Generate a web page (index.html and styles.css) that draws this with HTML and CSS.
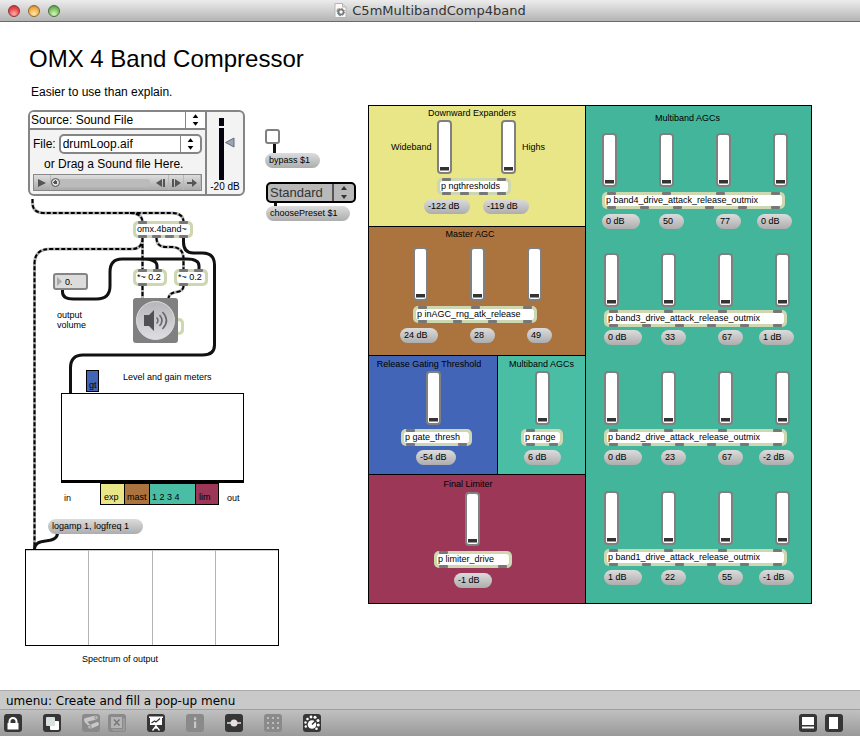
FILE: index.html
```html
<!DOCTYPE html>
<html lang="en">
<head>
<meta charset="utf-8">
<title>C5mMultibandComp4band</title>
<link rel="stylesheet" href="styles.css">
</head>
<body>
<header class="titlebar">
  <div class="lights">
    <button class="light red" aria-label="Close"></button>
    <button class="light amber" aria-label="Minimize"></button>
    <button class="light green" aria-label="Zoom"></button>
  </div>
  <div class="doc">
    <svg width="13" height="15" viewBox="0 0 13 15" aria-hidden="true"><path d="M1 .5h7.500l3.500 3.500v10.500h-11z" fill="#fafafa" stroke="#b5b5b5"/><path d="M8.500.5v3.500h3.500" fill="#ddd" stroke="#b5b5b5"/><path d="M3 7l3 6" stroke="#7cc8e8" stroke-width="2"/><path d="M3 7l2-1" stroke="#f0a060" stroke-width="2"/><circle cx="7" cy="9" r="2.500" fill="none" stroke="#777" stroke-width="1.500"/><circle cx="7" cy="9" r="3.600" fill="none" stroke="#777" stroke-dasharray="1.400 1.430"/></svg>
    <span>C5mMultibandComp4band</span>
  </div>
</header>

<main class="canvas">
  <h1 class="node title">OMX 4 Band Compressor</h1>
  <p class="node subtitle">Easier to use than explain.</p>

  <svg class="node wires" width="360" height="640" viewBox="0 22 360 640" aria-hidden="true">
    <g class="audio">
      <path d="M32.500 199v4q0 10 12 10h127q12 0 12 9M130 213q12 0 12.500 9"/>
      <path d="M142.500 238v32M142.500 238q0 11-11 11H50q-15.500 0-15.500 15v285"/>
      <path d="M156.500 238q0 9 10 9h5q12 0 12 12v11M142.500 286v13M183.500 286q0 5-7 6q-8 1-8 7"/>
    </g>
    <g class="dash">
      <path d="M32.500 199v4q0 10 12 10h127q12 0 12 9M130 213q12 0 12.500 9"/>
      <path d="M142.500 238v32M142.500 238q0 11-11 11H50q-15.500 0-15.500 15v285"/>
      <path d="M156.500 238q0 9 10 9h5q12 0 12 12v11M142.500 286v13M183.500 286q0 5-7 6q-8 1-8 7"/>
    </g>
    <g class="control">
      <path d="M183.500 238v4q0 11 10 11h9q12 0 12 12v80q0 10-12 10H83q-12.500 0-12.500 13v26"/>
      <path d="M62.500 290v2q0 7 11 7h23q13.500 0 13.500-13v-14q0-13 12-13h65q12 0 12 7v4M142 259q15 0 15 7v4"/>
      <path d="M57.500 533q0 7-12 8q-11 1-11 8"/>
      <path d="M274.500 143v10M275.500 202v5"/>
    </g>
  </svg>

  <section class="node source" aria-label="Audio source">
    <div class="source-main">
      <label class="pick source-pick"><select aria-label="Source"><option>Source: Sound File</option></select><svg width="20" height="16" viewBox="0 0 20 16"><path d="M10 2l3 4H7zM10 14l3-4H7z"/></svg></label>
      <div class="source-file">
        <div class="file-row"><label for="file">File:</label>
          <span class="pick file-pick"><select id="file"><option>drumLoop.aif</option></select><svg width="20" height="16" viewBox="0 0 20 16"><path d="M10 2l3 4H7zM10 14l3-4H7z"/></svg></span>
        </div>
        <div class="drop">or Drag a Sound file Here.</div>
        <div class="player">
          <button aria-label="Play"><svg width="16" height="15" viewBox="0 0 16 15"><path d="M4 4l8 4-8 4z"/></svg></button>
          <input type="range" value="0" aria-label="Position">
          <button aria-label="Back"><svg width="14" height="15" viewBox="0 0 14 15"><path d="M8 4v8L2 8zM9 4h2v8H9z"/></svg></button>
          <button aria-label="Forward"><svg width="14" height="15" viewBox="0 0 14 15"><path d="M3 4h2v8H3zM6 4l6 4-6 4z"/></svg></button>
          <button aria-label="Loop"><svg width="16" height="15" viewBox="0 0 16 15"><path d="M3 7h5V4l5 4-5 4V9H3z"/></svg></button>
        </div>
      </div>
    </div>
    <div class="gain">
      <svg width="34" height="64" viewBox="0 0 34 64" aria-hidden="true"><path d="M12 1h5v8h-5zM12 11h5v52h-5z" fill="#03030f"/><path d="M18.500 25.500l8.500-4.500v9z" fill="#9aa5b8" stroke="#666d7c"/></svg>
      <span>-20 dB</span>
    </div>
  </section>

  <input class="node toggle" type="checkbox" aria-label="Bypass">
  <button class="node msg bypass">bypass $1</button>
  <label class="node preset"><select aria-label="Preset"><option>Standard</option></select><svg width="18" height="17" viewBox="0 0 18 17"><path d="M9 2l3 4H6zM9 15l3-4H6z"/></svg></label>
  <button class="node msg choose">choosePreset $1</button>

  <div class="node obj omx"><div class="ports"><i></i><i></i></div><span>omx.4band~</span><div class="ports"><i></i><i></i><i></i><i></i></div></div>
  <div class="node obj mul-left"><div class="ports few"><i></i><i></i></div><span>*~ 0.2</span><div class="ports"><i></i></div></div>
  <div class="node obj mul-right"><div class="ports few"><i></i><i></i></div><span>*~ 0.2</span><div class="ports"><i></i></div></div>
  <div class="node number"><svg width="6" height="11" viewBox="0 0 6 11" aria-hidden="true"><path d="M0 1l5 4.500L0 10z" fill="#aaa"/></svg><input type="text" value="0." aria-label="Output volume"></div>
  <p class="node note volume-note">output<br>volume</p>
  <div class="node obj hidden-obj"><span></span></div>
  <button class="node dac" aria-label="Audio on or off"><svg width="45" height="45" viewBox="0 0 45 45"><defs><linearGradient id="disc" x2="0" y2="1"><stop stop-color="#b5b5ba"/><stop offset="1" stop-color="#dedee2"/></linearGradient></defs><circle cx="22.500" cy="22.500" r="19" fill="url(#disc)" stroke="#dcdce0"/><path d="M11 17h5l5-5v21l-5-5h-5z" fill="#505055"/><path d="M23.500 19.500q3 3 0 6M26.500 17q5 5.500 0 11M29.500 14q8 8.500 0 17" fill="none" stroke="#68686c" stroke-width="1.500"/></svg></button>

  <div class="node tag gt">gt</div>
  <p class="node note level-note">Level and gain meters</p>
  <div class="node meter"></div>
  <p class="node note in-note">in</p>
  <div class="node legend"><span class="exp">exp</span><span class="mast">mast</span><span class="bands">1 2 3 4</span><span class="lim">lim</span></div>
  <p class="node note out-note">out</p>
  <button class="node msg log">logamp 1, logfreq 1</button>
  <div class="node spectrum"><i></i><i></i><i></i><i></i></div>
  <p class="node note spectrum-note">Spectrum of output</p>

  <div class="node board">
    <section class="panel expanders">
      <h2>Downward Expanders</h2>
      <div class="strip">
        <div class="faders"><label for="wide">Wideband</label><input id="wide" type="range" value="0"><input id="highs" type="range" value="0"><label for="highs">Highs</label></div>
        <div class="obj"><div class="ports"><i></i><i></i></div><span>p ngthresholds</span><div class="ports"><i></i><i></i><i></i><i></i></div></div>
        <div class="values"><button class="msg">-122 dB</button><button class="msg">-119 dB</button></div>
      </div>
    </section>
    <section class="panel master">
      <h2>Master AGC</h2>
      <div class="strip">
        <div class="faders"><input type="range" value="0" aria-label="Range"><input type="range" value="0" aria-label="Attack"><input type="range" value="0" aria-label="Release"></div>
        <div class="obj"><div class="ports"><i></i><i></i><i></i></div><span>p inAGC_rng_atk_release</span><div class="ports"><i></i><i></i><i></i><i></i></div></div>
        <div class="values"><button class="msg">24 dB</button><button class="msg">28</button><button class="msg">49</button></div>
      </div>
    </section>
    <div class="pair">
      <section class="panel gate">
        <h2>Release Gating Threshold</h2>
        <div class="strip">
          <div class="faders"><input type="range" value="0" aria-label="Gate threshold"></div>
          <div class="obj"><div class="ports"><i></i></div><span>p gate_thresh</span><div class="ports"><i></i><i></i></div></div>
          <div class="values"><button class="msg">-54 dB</button></div>
        </div>
      </section>
      <section class="panel range">
        <h2>Multiband AGCs</h2>
        <div class="strip">
          <div class="faders"><input type="range" value="0" aria-label="AGC range"></div>
          <div class="obj"><div class="ports"><i></i></div><span>p range</span><div class="ports"><i></i><i></i></div></div>
          <div class="values"><button class="msg">6 dB</button></div>
        </div>
      </section>
    </div>
    <section class="panel limiter">
      <h2>Final Limiter</h2>
      <div class="strip">
        <div class="faders"><input type="range" value="0" aria-label="Limiter drive"></div>
        <div class="obj"><div class="ports"><i></i></div><span>p limiter_drive</span><div class="ports"><i></i><i></i></div></div>
        <div class="values"><button class="msg">-1 dB</button></div>
      </div>
    </section>
    <section class="panel multiband">
      <h2>Multiband AGCs</h2>
      <div class="strip band band4">
        <div class="faders"><input type="range" value="0" aria-label="Band 4 drive"><input type="range" value="0" aria-label="Band 4 attack"><input type="range" value="0" aria-label="Band 4 release"><input type="range" value="0" aria-label="Band 4 outmix"></div>
        <div class="obj"><div class="ports"><i></i><i></i><i></i><i></i></div><span>p band4_drive_attack_release_outmix</span><div class="ports"><i></i><i></i><i></i><i></i><i></i><i></i></div></div>
        <div class="values"><button class="msg">0 dB</button><button class="msg">50</button><button class="msg">77</button><button class="msg">0 dB</button></div>
      </div>
      <div class="strip band band3">
        <div class="faders"><input type="range" value="0" aria-label="Band 3 drive"><input type="range" value="0" aria-label="Band 3 attack"><input type="range" value="0" aria-label="Band 3 release"><input type="range" value="0" aria-label="Band 3 outmix"></div>
        <div class="obj"><div class="ports"><i></i><i></i><i></i><i></i></div><span>p band3_drive_attack_release_outmix</span><div class="ports"><i></i><i></i><i></i><i></i><i></i><i></i></div></div>
        <div class="values"><button class="msg">0 dB</button><button class="msg">33</button><button class="msg">67</button><button class="msg">1 dB</button></div>
      </div>
      <div class="strip band">
        <div class="faders"><input type="range" value="0" aria-label="Band 2 drive"><input type="range" value="0" aria-label="Band 2 attack"><input type="range" value="0" aria-label="Band 2 release"><input type="range" value="0" aria-label="Band 2 outmix"></div>
        <div class="obj"><div class="ports"><i></i><i></i><i></i><i></i></div><span>p band2_drive_attack_release_outmix</span><div class="ports"><i></i><i></i><i></i><i></i><i></i><i></i></div></div>
        <div class="values"><button class="msg">0 dB</button><button class="msg">23</button><button class="msg">67</button><button class="msg">-2 dB</button></div>
      </div>
      <div class="strip band">
        <div class="faders"><input type="range" value="0" aria-label="Band 1 drive"><input type="range" value="0" aria-label="Band 1 attack"><input type="range" value="0" aria-label="Band 1 release"><input type="range" value="0" aria-label="Band 1 outmix"></div>
        <div class="obj"><div class="ports"><i></i><i></i><i></i><i></i></div><span>p band1_drive_attack_release_outmix</span><div class="ports"><i></i><i></i><i></i><i></i><i></i><i></i></div></div>
        <div class="values"><button class="msg">1 dB</button><button class="msg">22</button><button class="msg">55</button><button class="msg">-1 dB</button></div>
      </div>
    </section>
  </div>
</main>

<footer>
  <div class="hint">umenu: Create and fill a pop-up menu</div>
  <div class="toolbar">
    <button class="tool" aria-label="Lock"><svg viewBox="0 0 18 18"><path d="M5.500 9V7.500a3.500 3.500 0 0 1 7 0V9" fill="none" stroke="#fff" stroke-width="2"/><path d="M3.500 9h11v6.500h-11z" fill="#fff"/></svg></button>
    <button class="tool" aria-label="Layers"><svg viewBox="0 0 18 18"><rect x="7" y="7" width="9" height="9" rx="1" fill="#fff"/><rect x="3" y="3" width="9" height="9" rx="1" fill="#d8e0e0"/></svg></button>
    <div class="tool-group">
      <button class="tool off" aria-label="Find" disabled><svg viewBox="0 0 18 18"><path d="M4 6l10-2.500M8 13l7-3" stroke="#c8c8c8" stroke-width="4" stroke-linecap="round"/><path d="M3 7l5 5" stroke="#c8c8c8" stroke-width="2"/><circle cx="14.500" cy="3.500" r="1.800" fill="#bbb" stroke="#888" stroke-width=".8"/><circle cx="7.500" cy="13" r="1.800" fill="#bbb" stroke="#888" stroke-width=".8"/></svg></button>
      <button class="tool off" aria-label="Delete" disabled><svg viewBox="0 0 18 18"><path d="M3 3h11v11H3z" fill="#b4b4b4"/><path d="M15 5h1v11H5v-1" fill="none" stroke="#aaa"/><path d="M6 5.500l5.500 6M11.500 5.500l-5.500 6" stroke="#777" stroke-width="1.500"/></svg></button>
    </div>
    <button class="tool" aria-label="Presentation"><svg viewBox="0 0 18 18"><path d="M2 2.500h14v1.500h-1V11H3V4H2z" fill="#fff"/><path d="M9 11v4M9 12l-3.500 4.500M9 12l3.500 4.500" stroke="#fff" stroke-width="1.300"/><path d="M4.500 9l3-2 1.500 1 4-3.500" fill="none" stroke="#333" stroke-width="1.200"/></svg></button>
    <button class="tool off" aria-label="Inspector" disabled><svg viewBox="0 0 18 18"><path d="M8 3.500h2.200V6H8zM8 7.500h2.200V14H8z" fill="#c8c8c8"/></svg></button>
    <button class="tool" aria-label="Signal"><svg viewBox="0 0 18 18"><path d="M2 9h14" stroke="#e8dfe2" stroke-width="1.500"/><circle cx="9" cy="9" r="3.500" fill="#e8dfe2"/></svg></button>
    <button class="tool off" aria-label="Grid" disabled><svg viewBox="0 0 18 18"><path d="M3 3h2v2H3zM8 3h2v2H8zM13 3h2v2h-2zM3 8h2v2H3zM8 8h2v2H8zM13 8h2v2h-2zM3 13h2v2H3zM8 13h2v2H8zM13 13h2v2h-2z" fill="#bcbcbc"/></svg></button>
    <button class="tool" aria-label="Parameters"><svg viewBox="0 0 18 18"><circle cx="9" cy="10.500" r="4.300" fill="#fff"/><g fill="#fff"><circle cx="2.800" cy="12.500" r="1.200"/><circle cx="2.500" cy="8.500" r="1.200"/><circle cx="4.500" cy="5" r="1.300"/><circle cx="8" cy="3" r="1.400"/><circle cx="12" cy="3.300" r="1.500"/><circle cx="15" cy="6.500" r="1.500"/><circle cx="15.300" cy="11" r="1.500"/><circle cx="13.500" cy="14.800" r="1.300"/></g><path d="M9 10.500l3.500-3.500" stroke="#333" stroke-width="1.500"/></svg></button>
    <div class="tool-right">
      <button class="tool" aria-label="Bottom pane"><svg viewBox="0 0 18 18"><path d="M3 3h12v8H3zM3 12.500h12v2H3z" fill="#fff"/></svg></button>
      <button class="tool" aria-label="Side pane"><svg viewBox="0 0 18 18"><path d="M4 3h9v12H4z" fill="#fff"/></svg></button>
    </div>
  </div>
</footer>
</body>
</html>
```
FILE: styles.css
```css
* { box-sizing: border-box; }

body {
  margin: 0;
  min-height: 100vh;
  display: flex;
  flex-direction: column;
  background: #fff;
  color: #000;
  font-family: "Liberation Sans", Arial, sans-serif;
  font-size: 9px;
}

h1, h2, p { margin: 0; font-weight: normal; white-space: nowrap; }
button, input, select { margin: 0; padding: 0; border: 0; font: inherit; color: inherit; }
button svg { display: block; }
i { display: block; }

/* Window title bar */
.titlebar {
  display: grid;
  grid-template-columns: 1fr auto 1fr;
  align-items: center;
  height: 22px;
  padding: 0 8px;
  background: linear-gradient(#ececec, #b4b4b4);
  border-bottom: 1px solid #6a6a6a;
}
.lights { display: flex; gap: 8px; }
.light { width: 12px; height: 12px; border-radius: 50%; border: 1px solid #777; }
.red { background: radial-gradient(circle at 50% 80%, #ffb0a8, #e8454a 60%, #b83038); border-color: #8c3236; }
.amber { background: radial-gradient(circle at 50% 80%, #ffe9a0, #f0ab4c 60%, #c27c28); border-color: #8f6430; }
.green { background: radial-gradient(circle at 50% 80%, #d4f7b8, #78bd62 60%, #4d8f40); border-color: #476f3c; }
.doc {
  display: flex;
  align-items: center;
  gap: 5px;
  color: #333;
  font: 13px "DejaVu Sans", sans-serif;
}

/* Patcher canvas: every object has its own place on it */
.canvas { position: relative; flex: 1; min-height: 668px; }
.node { position: absolute; }
.title { left: 29px; top: 23px; font-size: 24px; line-height: 28px; }
.subtitle { left: 31px; top: 63px; font-size: 12px; line-height: 14px; }
.note { line-height: 10px; }

.wires { left: 0; top: 0; fill: none; }
.audio { stroke: #b0b0b0; stroke-width: 3; }
.dash { stroke: #000; stroke-width: 2; stroke-dasharray: 4 2; }
.control { stroke: #111; stroke-width: 3; }

/* Message boxes */
.msg {
  height: 15px;
  padding: 0 4px;
  border-radius: 8px;
  background: linear-gradient(#dcdcdc, #adadad);
  line-height: 13px;
  text-align: left;
  white-space: nowrap;
}
.bypass { left: 265px; top: 131px; width: 55px; }
.choose { left: 266px; top: 184px; width: 84px; }
.log { left: 48px; top: 497px; width: 95px; }

/* Object boxes with their inlets and outlets */
.obj { height: 17px; padding: 0 3px; border-radius: 5px; background: #cdd7b1; }
.obj span {
  display: block;
  height: 11px;
  padding-left: 1px;
  border-radius: 3px;
  background: #fff;
  line-height: 10px;
  white-space: nowrap;
}
.ports { display: flex; justify-content: space-between; height: 3px; padding: 0 2px; }
.ports i { width: 9px; height: 3px; border-radius: 1px; background: #777; }
.few { justify-content: flex-start; gap: 6px; }
.omx { left: 133px; top: 199px; width: 60px; }
.mul-left { left: 133px; top: 247px; width: 34px; }
.mul-right { left: 174px; top: 247px; width: 34px; }
.hidden-obj { left: 150px; top: 296px; width: 34px; padding: 3px; }

/* Sound source */
.source {
  left: 28px;
  top: 88px;
  width: 217px;
  height: 86px;
  display: flex;
  overflow: hidden;
  border: 2px solid #858585;
  border-radius: 6px;
  background: #f3f3f3;
  font-size: 12px;
}
.source-main { flex: 1; min-width: 0; border-right: 2px solid #858585; }
.pick { display: flex; align-items: center; background: #fff; }
.pick select { flex: 1; min-width: 0; appearance: none; background: none; font-size: 12px; }
.pick svg { flex: none; border-left: 1px solid #858585; }
.source-pick { height: 18px; border-bottom: 2px solid #858585; padding-left: 1px; }
.source-file { padding: 4px 3px 0; }
.file-row { display: flex; align-items: center; gap: 3px; }
.file-pick { flex: 1; min-width: 0; height: 20px; padding-left: 2px; border: 2px solid #858585; border-radius: 5px; }
.drop { height: 20px; line-height: 20px; padding-left: 11px; white-space: nowrap; }
.player {
  display: flex;
  align-items: center;
  height: 17px;
  border: 1px solid #888;
  background: linear-gradient(#ddd, #aaa);
}
.player button { flex: none; background: none; border-right: 1px solid #b8b8b8; fill: #555; }
.player input {
  appearance: none;
  flex: 1;
  min-width: 0;
  height: 8px;
  margin-right: 4px;
  border-radius: 3px;
  background: #bbb;
}
.player input::-webkit-slider-thumb {
  appearance: none;
  width: 9px;
  height: 9px;
  border: 1px solid #555;
  border-radius: 50%;
  background: radial-gradient(circle, #555 2px, #ddd 2px);
}
.gain { flex: none; width: 36px; padding-top: 5px; font-size: 10px; text-align: center; white-space: nowrap; }
.gain svg { display: block; }

/* Toggle, preset menu, number box, audio switch */
.toggle {
  appearance: none;
  left: 265px;
  top: 107px;
  width: 15px;
  height: 15px;
  border: 2px solid #808080;
  border-radius: 3px;
  background: #fff;
}
.preset {
  left: 266px;
  top: 160px;
  width: 90px;
  height: 21px;
  display: flex;
  border: 2px solid #000;
  border-radius: 5px;
  background: #b9b9b9;
  color: #333;
  fill: #333;
}
.preset select { flex: 1; min-width: 0; appearance: none; background: none; padding-left: 2px; font-size: 13px; }
.preset svg { flex: none; border-left: 2px solid #555; width: 22px; }
.number {
  left: 53px;
  top: 251px;
  width: 35px;
  height: 17px;
  display: flex;
  align-items: center;
  gap: 2px;
  padding-left: 2px;
  border: 2px solid #858585;
  border-radius: 3px;
  background: #dcdcdc;
}
.number input { width: 16px; background: none; }
.dac { left: 133px; top: 276px; border-radius: 3px; background: #808080; }

/* Meters */
.volume-note { left: 57px; top: 288px; }
.level-note { left: 123px; top: 350px; }
.in-note { left: 64px; top: 471px; }
.out-note { left: 227px; top: 471px; }
.spectrum-note { left: 82px; top: 632px; }
.gt { left: 86px; top: 348px; width: 13px; height: 22px; padding: 9px 0 0 2px; border: 1px solid #000; background: #4265b8; }
.meter { left: 61px; top: 371px; width: 183px; height: 90px; border: 1px solid #000; border-bottom-width: 3px; background: #fff; }
.legend {
  left: 100px;
  top: 461px;
  display: grid;
  grid-template-columns: 23px 24px 45px 22px;
  gap: 1px;
  padding: 1px;
  background: #000;
}
.legend span { height: 20px; padding-left: 2px; line-height: 27px; white-space: nowrap; }
.legend .exp, .legend .lim { padding-left: 3px; }
.exp { background: #e8e686; }
.mast { background: #ab743f; }
.bands { background: #4abea5; }
.lim { background: #9c3757; }
.spectrum {
  left: 25px;
  top: 527px;
  width: 254px;
  height: 97px;
  display: grid;
  grid-template-columns: 62px 64px 63px 63px;
  border: 1px solid #000;
  background: #fff;
}
.spectrum i { border-top: 1px solid #ccc; }
.spectrum i + i { border-left: 1px solid #b4b4b4; }

/* Control board */
.board {
  left: 368px;
  top: 83px;
  display: grid;
  grid-template: 120px 128px 118px 128px / 216px 225px;
  gap: 1px;
  padding: 1px;
  background: #000;
}
.pair { display: grid; grid-template-columns: 128px 1fr; gap: 1px; }
.panel { min-width: 0; text-align: center; }
.panel h2 { height: 14px; font-size: 9px; line-height: 14px; }
.expanders { background: #e8e686; padding-right: 10px; }
.master { background: #ab743f; padding-right: 14px; }
.gate { background: #4265b8; }
.range { background: #4abea5; }
.limiter { background: #9c3757; padding-right: 18px; }
.multiband { grid-area: 1 / 2 / 5 / 3; padding-top: 5px; background: #43b59a; }
.multiband h2 { padding-right: 22px; }

.strip { display: flex; flex-direction: column; align-items: flex-start; gap: 4px; text-align: left; }
.faders { display: flex; height: 54px; }
.faders input {
  appearance: none;
  writing-mode: vertical-lr;
  direction: rtl;
  flex: none;
  width: 15px;
  height: 54px;
  padding: 1px 0;
  border: 2px solid #808080;
  border-radius: 4px;
  background: #fff;
}
.faders input::-webkit-slider-thumb {
  appearance: none;
  width: 9px;
  height: 4px;
  border-bottom: 1px solid #999;
  background: #333;
}
.values { display: flex; }

.expanders .faders { padding-left: 22px; align-items: center; }
.expanders .faders label:first-child { width: 46px; }
.expanders .faders #highs { margin: 0 6px 0 49px; }
.expanders .obj { margin-left: 68px; width: 74px; }
.expanders .values { margin-left: 55px; gap: 13px; }
.expanders .msg { width: 46px; }

.master .strip { gap: 5px; padding: 6px 0 0 44px; }
.master .faders { gap: 42px; }
.master .obj { width: 124px; }
.master .values { display: grid; grid-template-columns: 70px 57px 25px; margin-left: -13px; }
.master .msg { width: 25px; }
.master .msg:first-child { width: 38px; }

.gate h2, .range h2 { height: 15px; line-height: 16px; }
.gate h2 { padding-right: 8px; }
.gate .faders { margin-left: 57px; }
.gate .obj { width: 71px; margin-left: 32px; }
.gate .values { margin-left: 47px; }
.gate .msg { width: 40px; }
.range .faders { margin-left: 37px; }
.range .obj { width: 42px; margin-left: 23px; }
.range .values { margin-left: 26px; }
.range .msg { width: 37px; }

.limiter h2 { height: 17px; line-height: 18px; }
.limiter .strip { gap: 5px; }
.limiter .faders { margin-left: 96px; }
.limiter .obj { width: 78px; margin-left: 65px; }
.limiter .values { margin-left: 85px; }
.limiter .msg { width: 38px; }

.band { height: 120px; margin-left: 18px; }
.band4 { gap: 5px; margin: 8px 0 0 16px; }
.band3 { gap: 3px; height: 118px; }
.band .faders { gap: 42px; }
.band .obj { width: 183px; }
.band .values { display: grid; grid-template-columns: 57px 57px 41px 35px; }
.band .msg { width: 25px; }
.band .msg:first-child { width: 38px; }
.band .msg:last-child { width: 35px; }

/* Hint line and toolbar */
.hint {
  height: 19px;
  padding-left: 6px;
  border-top: 1px solid #aaa;
  background: #c9c9c9;
  font: 12px/20px "DejaVu Sans", sans-serif;
}
.toolbar {
  display: flex;
  align-items: center;
  gap: 21px;
  height: 27px;
  padding: 0 17px 0 4px;
  border-top: 1px solid #a0a0a0;
  background: linear-gradient(#c0c0c0, #999);
}
.tool { width: 18px; height: 18px; border-radius: 3px; background: #363636; }
.tool.off { background: #8a8a8a; }
.tool-group { display: flex; gap: 8px; }
.tool-right { display: flex; gap: 8px; margin-left: auto; }
```
